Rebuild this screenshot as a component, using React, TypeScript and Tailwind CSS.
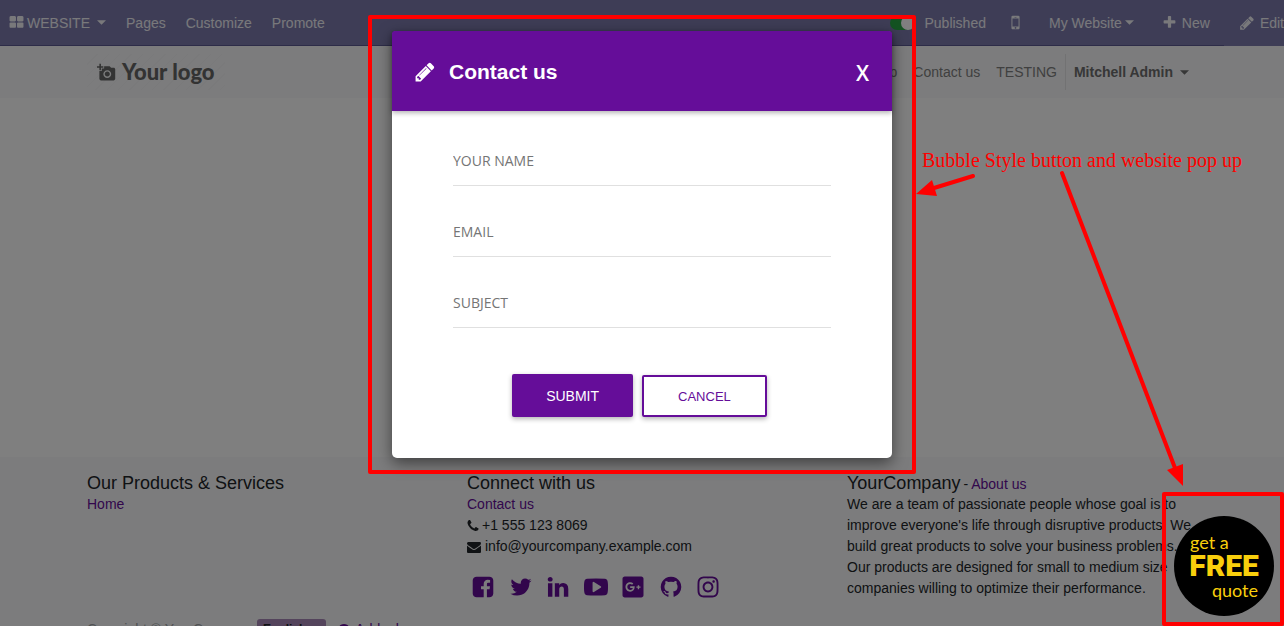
import type { ReactNode } from "react";
import { FaGooglePlusSquare, FaInstagram } from "react-icons/fa";
import { MdAddAPhoto } from "react-icons/md";

const glyphs = {
  thLarge:
    "M832 1024v384q0 52-38 90t-90 38h-512q-52 0-90-38t-38-90v-384q0-52 38-90t90-38h512q52 0 90 38t38 90zm0-768v384q0 52-38 90t-90 38h-512q-52 0-90-38t-38-90v-384q0-52 38-90t90-38h512q52 0 90 38t38 90zm896 768v384q0 52-38 90t-90 38h-512q-52 0-90-38t-38-90v-384q0-52 38-90t90-38h512q52 0 90 38t38 90zm0-768v384q0 52-38 90t-90 38h-512q-52 0-90-38t-38-90v-384q0-52 38-90t90-38h512q52 0 90 38t38 90z",
  pencil:
    "M491 1536l91-91-235-235-91 91v107h128v128h107zm523-928q0-22-22-22-10 0-17 7l-542 542q-7 7-7 17 0 22 22 22 10 0 17-7l542-542q7-7 7-17zm-54-192l416 416-832 832h-416v-416zm683 96q0 53-37 90l-166 166-416-416 166-165q36-38 90-38 53 0 91 38l235 234q37 39 37 91z",
  mobile:
    "M976 1408q0-33-23.5-56.5t-56.5-23.5-56.5 23.5-23.5 56.5 23.5 56.5 56.5 23.5 56.5-23.5 23.5-56.5zm208-160v-704q0-13-9.5-22.5t-22.5-9.5h-512q-13 0-22.5 9.5t-9.5 22.5v704q0 13 9.5 22.5t22.5 9.5h512q13 0 22.5-9.5t9.5-22.5zm-192-848q0-16-16-16h-160q-16 0-16 16t16 16h160q16 0 16-16zm288-16v1024q0 52-38 90t-90 38h-512q-52 0-90-38t-38-90v-1024q0-52 38-90t90-38h512q52 0 90 38t38 90z",
  plus: "M1600 736v192q0 40-28 68t-68 28h-416v416q0 40-28 68t-68 28h-192q-40 0-68-28t-28-68v-416h-416q-40 0-68-28t-28-68v-192q0-40 28-68t68-28h416v-416q0-40 28-68t68-28h192q40 0 68 28t28 68v416h416q40 0 68 28t28 68z",
  plusCircle:
    "M1344 960v-128q0-26-19-45t-45-19h-256v-256q0-26-19-45t-45-19h-128q-26 0-45 19t-19 45v256h-256q-26 0-45 19t-19 45v128q0 26 19 45t45 19h256v256q0 26 19 45t45 19h128q26 0 45-19t19-45v-256h256q26 0 45-19t19-45zm320-64q0 209-103 385.5t-279.5 279.5-385.5 103-385.5-103-279.5-279.5-103-385.5 103-385.5 279.5-279.5 385.5-103 385.5 103 279.5 279.5 103 385.5z",
  phone:
    "M1600 1240q0 27-10 70.5t-21 68.5q-21 50-122 106-94 51-186 51-27 0-52.5-3.5t-57.5-12.5-47.5-14.5-55.5-20.5-49-18q-98-35-175-83-128-79-264.5-215.5t-215.5-264.5q-48-77-83-175-3-9-18-49t-20.5-55.5-14.5-47.5-12.5-57.5-3.5-52.5q0-92 51-186 56-101 106-122 25-11 68.5-21t70.5-10q14 0 21 3 18 6 53 76 11 19 30 54t35 63.5 31 53.5q3 4 17.5 25t21.5 35.5 7 28.5q0 20-28.5 50t-62 55-62 53-28.5 46q0 9 5 22.5t8.5 20.5 14 24 11.5 19q76 137 174 235t235 174q2 1 19 11.5t24 14 20.5 8.5 22.5 5q18 0 46-28.5t53-62 55-62 50-28.5q14 0 28.5 7t35.5 21.5 25 17.5q25 15 53.5 31t63.5 35 54 30q70 35 76 53 3 7 3 21z",
  envelope:
    "M1792 710v794q0 66-47 113t-113 47h-1472q-66 0-113-47t-47-113v-794q44 49 101 87 362 246 497 345 57 42 92.5 65.5t94.5 48 110 24.5h2q51 0 110-24.5t94.5-48 92.5-65.5q170-123 498-345 57-39 100-87zm0-294q0 79-49 151t-122 123q-376 261-468 325-10 7-42.5 31t-54 38.5-52 32.5-57.5 27-50 9h-2q-23 0-50-9t-57.5-27-52-32.5-54-38.5-42.5-31q-91-64-262-182.5t-205-142.5q-62-42-117-115.5t-55-136.5q0-78 41.5-130t118.5-52h1472q65 0 112.5 47t47.5 113z",
  facebook:
    "M1376 128q119 0 203.5 84.5t84.5 203.5v960q0 119-84.5 203.5t-203.5 84.5h-188v-595h199l30-232h-229v-148q0-56 23.5-84t91.5-28l122-1v-207q-63-9-178-9-136 0-217.5 80t-81.5 226v171h-200v232h200v595h-532q-119 0-203.5-84.5t-84.5-203.5v-960q0-119 84.5-203.5t203.5-84.5h960z",
  twitter:
    "M1684 408q-67 98-162 167 1 14 1 42 0 130-38 259.5t-115.5 248.5-184.5 210.5-258 146-323 54.5q-271 0-496-145 35 4 78 4 225 0 401-138-105-2-188-64.5t-114-159.5q33 5 61 5 43 0 85-11-112-23-185.5-111.5t-73.5-205.5v-4q68 38 146 41-66-44-105-115t-39-154q0-88 44-163 121 149 294.5 238.5t371.5 99.5q-8-38-8-74 0-134 94.5-228.5t228.5-94.5q140 0 236 102 109-21 205-78-37 115-142 178 93-10 186-50z",
  linkedin:
    "M477 625v991h-330v-991h330zm21-306q1 73-50.5 122t-135.5 49h-2q-82 0-132-49t-50-122q0-74 51.5-122.5t134.5-48.5 133 48.5 51 122.5zm1166 729v568h-329v-530q0-105-40.5-164.5t-126.5-59.5q-63 0-105.5 34.5t-63.5 85.5q-11 30-11 81v553h-329q2-399 2-647t-1-296l-1-48h329v144h-2q20-32 41-56t56.5-52 87-43.5 114.5-15.5q171 0 275 113.5t104 332.5z",
  youtube:
    "M1280 896q0-37-30-54l-512-320q-31-20-65-2-33 18-33 56v640q0 38 33 56 16 8 31 8 20 0 34-10l512-320q30-17 30-54zm512 0q0 96-1 150t-8.5 136.5-22.5 147.5q-16 73-69 123t-124 58q-222 25-671 25t-671-25q-71-8-124.5-58t-69.5-123q-14-65-21.5-147.5t-8.5-136.5-1-150 1-150 8.5-136.5 22.5-147.5q16-73 69-123t124-58q222-25 671-25t671 25q71 8 124.5 58t69.5 123q14 65 21.5 147.5t8.5 136.5 1 150z",
  github:
    "M896 128q209 0 385.5 103t279.5 279.5 103 385.5q0 251-146.5 451.5t-378.5 277.5q-27 5-40-7t-13-30q0-3 .5-76.5t.5-134.5q0-97-52-142 57-6 102.5-18t94-39 81-66.5 53-105 20.5-150.5q0-119-79-206 37-91-8-204-28-9-81 11t-92 44l-38 24q-93-26-192-26t-192 26q-16-11-42.5-27t-83.5-38.5-85-13.5q-45 113-8 204-79 87-79 206 0 85 20.5 150t52.5 105 80.5 67 94 39 102.5 18q-39 36-49 103-21 10-45 15t-57 5-65.5-21.5-55.5-62.5q-19-32-48.5-52t-49.5-24l-20-3q-21 0-29 4.5t-5 11.5 9 14 13 12l7 5q22 10 43.5 38t31.5 51l10 23q13 38 44 61.5t67 30 69.5 7 55.5-3.5l23-4q0 38 .5 88.5t.5 54.5q0 18-13 30t-40 7q-232-77-378.5-277.5t-146.5-451.5q0-209 103-385.5t279.5-279.5 385.5-103z",
};

function Glyph({ name, className }: { name: keyof typeof glyphs; className: string }) {
  return (
    <svg viewBox="0 0 1792 1792" fill="currentColor" aria-hidden="true" className={className}>
      <path d={glyphs[name]} />
    </svg>
  );
}

function Caret() {
  return (
    <svg viewBox="0 0 10 5" fill="currentColor" aria-hidden="true" className="h-[5px] w-[9px] shrink-0">
      <path d="M0 0h10L5 5z" />
    </svg>
  );
}

function AdminBar() {
  return (
    <nav className="flex h-[46px] justify-between border-b border-[#5a5990] bg-[#7c7bad] text-white/90">
      <div className="flex items-center gap-5 pl-[9px]">
        <button type="button" className="flex items-center gap-[3px]">
          <Glyph name="thLarge" className="h-[15px] w-[15px]" />
          WEBSITE
          <span className="pl-1">
            <Caret />
          </span>
        </button>
        <a href="#pages">Pages</a>
        <a href="#customize">Customize</a>
        <a href="#promote">Promote</a>
      </div>
      <div className="flex shrink-0 items-center">
        <label className="flex items-center gap-[9px]">
          <input type="checkbox" defaultChecked className="peer sr-only" />
          <span className="flex h-[14px] w-[25px] justify-end rounded-full bg-[#28a745]">
            <span className="h-[14px] w-[14px] rounded-full bg-white" />
          </span>
          Published
        </label>
        <button type="button" aria-label="Mobile preview" className="ml-5">
          <Glyph name="mobile" className="h-[19px] w-[19px]" />
        </button>
        <button type="button" className="ml-6 flex items-center gap-[3px]">
          My Website
          <Caret />
        </button>
        <button type="button" className="ml-7 flex items-center gap-[5px]">
          <Glyph name="plus" className="h-[15px] w-[15px]" />
          New
        </button>
        <button
          type="button"
          className="-mb-px ml-[14px] flex h-[46px] items-center gap-[5px] self-start bg-[#7c7bad] pl-[15px]"
        >
          <Glyph name="pencil" className="h-4 w-4" />
          Edit
        </button>
      </div>
    </nav>
  );
}

function SiteHeader() {
  return (
    <header className="bg-[#f8f9fa]">
      <div className="mx-auto flex h-[52px] max-w-[1140px] items-center justify-between px-[15px]">
        <a
          href="#home"
          className="flex h-9 items-center gap-1.5 bg-[repeating-linear-gradient(135deg,#f8f9fa_0_7px,#f4f5f6_7px_8px)] px-[10px] font-['Lato',sans-serif] text-[22px] font-black text-[#666]"
        >
          <MdAddAPhoto className="h-[19px] w-[19px]" />
          Your logo
        </a>
        <div className="flex h-9 items-center text-[#808080]">
          <a href="#home" className="px-2">Home</a>
          <a href="#shop" className="px-2">Shop</a>
          <a href="#contact" className="px-2">Contact us</a>
          <a href="#testing" className="px-2">TESTING</a>
          <button
            type="button"
            className="flex h-9 items-center gap-[7px] border-l border-[#e4e5e6] px-2 font-bold text-[#6e6e6e]"
          >
            Mitchell Admin
            <Caret />
          </button>
        </div>
      </div>
    </header>
  );
}

function SocialLink({ label, children }: { label: string; children: ReactNode }) {
  return (
    <a href="#social" aria-label={label}>
      {children}
    </a>
  );
}

function SiteFooter() {
  return (
    <footer className="bg-[#f8f9fa] pt-4 leading-[21px] text-[#212529]">
      <div className="mx-auto grid max-w-[1140px] grid-cols-3">
        <div className="px-[15px]">
          <h5 className="text-lg leading-[21px]">Our Products &amp; Services</h5>
          <a href="#home" className="text-[#650d99]">Home</a>
        </div>
        <div className="px-[15px]">
          <h5 className="text-lg leading-[21px]">Connect with us</h5>
          <a href="#contact" className="text-[#650d99]">Contact us</a>
          <p className="flex items-center gap-0.5">
            <Glyph name="phone" className="-ml-px h-[14px] w-[14px]" />
            +1 555 123 8069
          </p>
          <p className="flex items-center gap-1">
            <Glyph name="envelope" className="h-[14px] w-[14px]" />
            info@yourcompany.example.com
          </p>
          <div className="mt-[18px] ml-1 flex w-[249px] justify-between text-[#650d99]">
            <SocialLink label="Facebook"><Glyph name="facebook" className="h-6 w-6" /></SocialLink>
            <SocialLink label="Twitter"><Glyph name="twitter" className="h-6 w-6" /></SocialLink>
            <SocialLink label="LinkedIn"><Glyph name="linkedin" className="h-6 w-6" /></SocialLink>
            <SocialLink label="YouTube"><Glyph name="youtube" className="h-6 w-6" /></SocialLink>
            <SocialLink label="Google Plus"><FaGooglePlusSquare className="h-6 w-6" /></SocialLink>
            <SocialLink label="GitHub"><Glyph name="github" className="h-6 w-6" /></SocialLink>
            <SocialLink label="Instagram"><FaInstagram className="h-6 w-6" /></SocialLink>
          </div>
        </div>
        <div className="px-[15px]">
          <div className="flex h-[21px] items-baseline gap-[3px]">
            <h5 className="text-lg leading-[21px]">YourCompany</h5>
            <span>
              - <a href="#about" className="text-[#650d99]">About us</a>
            </span>
          </div>
          <p>
            We are a team of passionate people whose goal is to improve everyone&apos;s life through
            disruptive products. We build great products to solve your business problems.
          </p>
          <p>
            Our products are designed for small to medium size companies willing to optimize their
            performance.
          </p>
        </div>
      </div>
      <div className="mx-auto mt-5 flex max-w-[1140px] items-start px-[15px] pb-4">
        <span className="text-[#a0a4a8]">Copyright © YourCompany</span>
        <button
          type="button"
          className="ml-1 flex h-5 items-center gap-[5px] rounded-[3px] bg-[#a989b8] px-1.5 text-xs font-bold"
        >
          English
          <Caret />
        </button>
        <a href="#language" className="ml-[11px] flex items-center gap-1 text-[#650d99]">
          <Glyph name="plusCircle" className="h-[14px] w-[14px]" />
          Add a language...
        </a>
      </div>
    </footer>
  );
}

const fields = [
  { name: "name", type: "text", label: "YOUR NAME" },
  { name: "email", type: "email", label: "EMAIL" },
  { name: "subject", type: "text", label: "SUBJECT" },
];

function ContactDialog() {
  return (
    <div
      role="dialog"
      aria-labelledby="contact-title"
      className="relative w-full max-w-[500px] rounded-[5px] bg-white shadow-[0_5px_15px_rgba(0,0,0,0.5)]"
    >
      <div className="flex h-20 items-center rounded-t-[3px] bg-[#650d99] px-[23px] pt-0.5 text-white shadow-[0_2px_5px_rgba(0,0,0,0.3)]">
        <Glyph name="pencil" className="-ml-px h-[22px] w-[22px]" />
        <h2 id="contact-title" className="ml-[13px] text-[21px] font-bold">Contact us</h2>
        <button
          type="button"
          aria-label="Close"
          className="ml-auto pt-0.5 font-['Open_Sans',sans-serif] text-[21px] leading-8 font-semibold"
        >
          X
        </button>
      </div>
      <form className="px-[61px] pt-[25px] pb-[41px]">
        <div className="flex flex-col gap-[21px]">
          {fields.map((f) => (
            <input
              key={f.name}
              name={f.name}
              type={f.type}
              aria-label={f.label}
              placeholder={f.label}
              className="h-[50px] w-full border-b border-[#e0e0e0] font-['Open_Sans',sans-serif] text-sm outline-none placeholder:text-[#757575]"
            />
          ))}
        </div>
        <div className="mt-[46px] flex items-end justify-center gap-[9px] pr-[5px]">
          <button
            type="submit"
            className="h-[43px] rounded-[2px] bg-[#650d99] px-[34px] text-sm text-white shadow-[0_2px_5px_rgba(0,0,0,0.3)]"
          >
            SUBMIT
          </button>
          <button
            type="button"
            className="h-[42px] rounded-[2px] border-2 border-[#650d99] px-[34px] pt-0.5 text-[13px] text-[#650d99] shadow-[0_2px_5px_rgba(0,0,0,0.3)]"
          >
            CANCEL
          </button>
        </div>
      </form>
      <div className="pointer-events-none absolute -inset-x-6 -top-4 -bottom-4 rounded-[2px] border-4 border-[#ff0000]" />
    </div>
  );
}

function QuoteBubble() {
  return (
    <div className="absolute right-0 bottom-0 rounded-[2px] border-4 border-[#ff0000] pt-5 pr-1.5 pb-1.5 pl-2">
      <button
        type="button"
        className="flex h-25 w-25 flex-col justify-center rounded-full bg-black px-4 text-[#f9cf0c]"
      >
        <span className="self-start font-['Lato',sans-serif] text-lg leading-[22px]">get a</span>
        <span className="self-center font-['Roboto',sans-serif] text-[30px] leading-[26px] font-black">
          FREE
        </span>
        <span className="self-end font-['Lato',sans-serif] text-lg leading-[22px]">quote</span>
      </button>
    </div>
  );
}

function Callouts() {
  return (
    <>
      <p className="absolute top-[148px] left-[922px] font-['Liberation_Serif',serif] text-xl leading-6 whitespace-nowrap text-[#ff0000]">
        Bubble Style button and website pop up
      </p>
      <svg
        width="1284"
        height="626"
        aria-hidden="true"
        fill="#ff0000"
        stroke="#ff0000"
        className="pointer-events-none absolute top-0 left-0"
      >
        <path d="M973 176L934 188M1062 173L1175 468" strokeWidth="4" strokeLinecap="round" />
        <path d="M916 194L932 180L937 196ZM1183 486L1167 470L1183 464Z" stroke="none" />
      </svg>
    </>
  );
}

export default function App() {
  return (
    <div className="relative h-screen overflow-hidden bg-white font-['Liberation_Sans',sans-serif] text-sm">
      <AdminBar />
      <SiteHeader />
      <main className="h-[359px]" />
      <SiteFooter />
      <div className="absolute inset-0 flex items-start justify-center bg-black/50 pt-[31px]">
        <ContactDialog />
      </div>
      <QuoteBubble />
      <Callouts />
    </div>
  );
}
